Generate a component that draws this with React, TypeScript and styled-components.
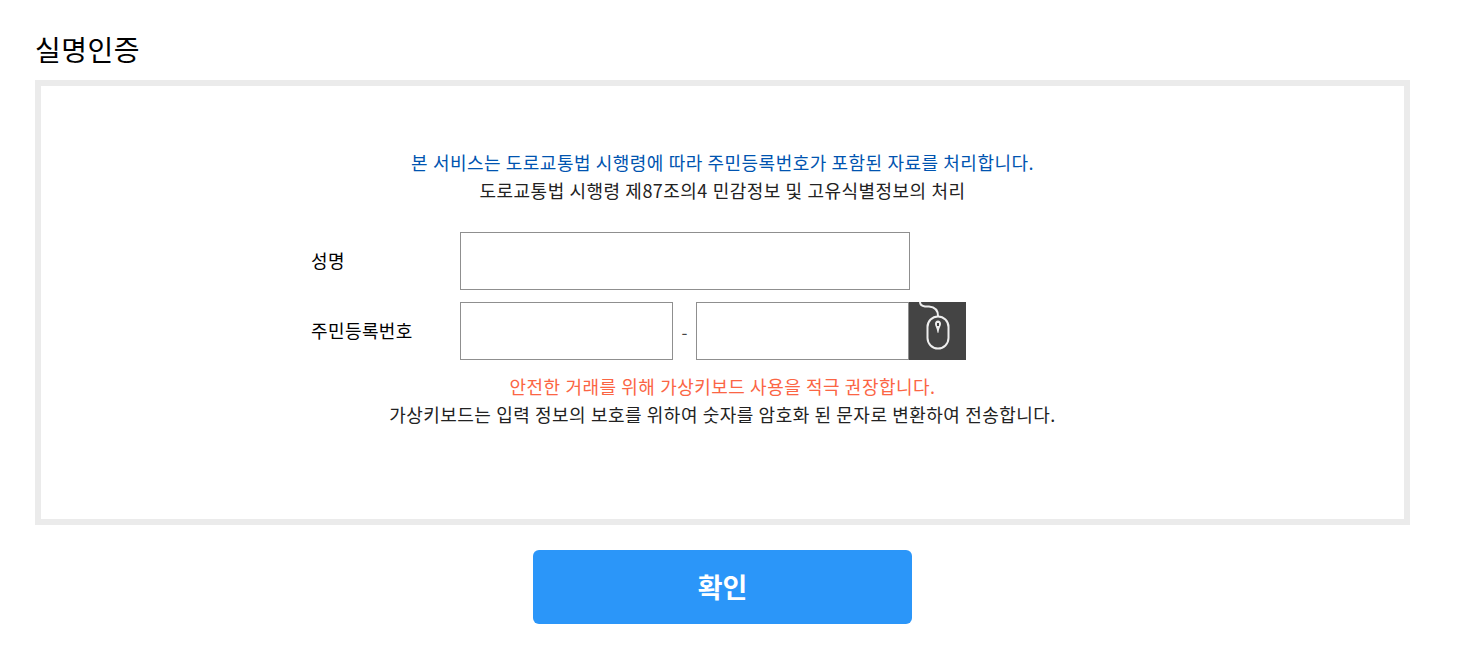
import React from "react"
import styled, { createGlobalStyle } from "styled-components"

const GlobalStyle = createGlobalStyle`
	html, body {
		margin: 0;
		padding: 0;
		background: #fff;
		font-family: "Noto Sans CJK KR", "Noto Sans", sans-serif;
		color: #222;
	}
`

const MouseIcon: React.FC = () => (
	<svg width="57" height="58" viewBox="0 0 57 58" fill="none" stroke="#eee" strokeWidth="2">
		<path d="M11 0c0 3 2 4 5 4.500h4c5 .5 9 3 9 9.500" />
		<rect x="18.500" y="14.500" width="21" height="32" rx="10.500" />
		<path d="M29 18.500c-1.800 0-3 1.400-3 3.200 0 2.300 2 4 2.500 9h1c.5-5 2.500-6.700 2.500-9 0-1.800-1.200-3.200-3-3.200z" fill="#eee" stroke="none" />
		<rect x="28" y="21" width="2" height="3" fill="#444" stroke="none" />
	</svg>
)

const App: React.FC = () => {
	return (
		<Page>
			<GlobalStyle />
			<Heading>실명인증</Heading>
			<Panel>
				<Notice>
					<Blue>본 서비스는 도로교통법 시행령에 따라 주민등록번호가 포함된 자료를 처리합니다.</Blue>
					<p>도로교통법 시행령 제87조의4 민감정보 및 고유식별정보의 처리</p>
				</Notice>
				<Form>
					<Row>
						<Label>성명</Label>
						<Input $width={450} />
					</Row>
					<Row>
						<Label>주민등록번호</Label>
						<Input $width={213} />
						<Dash>-</Dash>
						<Input $width={213} />
						<MouseButton type="button" aria-label="가상키보드">
							<MouseIcon />
						</MouseButton>
					</Row>
				</Form>
				<Notice>
					<Red>안전한 거래를 위해 가상키보드 사용을 적극 권장합니다.</Red>
					<p>가상키보드는 입력 정보의 보호를 위하여 숫자를 암호화 된 문자로 변환하여 전송합니다.</p>
				</Notice>
			</Panel>
			<Actions>
				<Confirm type="button">확인</Confirm>
			</Actions>
		</Page>
	)
}

export default App

const Page = styled.div`
	width: 1375px;
	margin-left: 35px;
	padding-top: 29px;
`

const Heading = styled.h2`
	margin: 0 0 10px;
	font-size: 28px;
	letter-spacing: 0.500px;
	line-height: 41px;
	font-weight: 400;
	color: #000;
`

const Panel = styled.section`
	box-sizing: border-box;
	height: 445px;
	border: 6px solid #ebebeb;
	padding-top: 62px;
`

const Notice = styled.div`
	text-align: center;
	font-size: 18px;
	line-height: 28px;
	letter-spacing: 0.470px;
	word-spacing: 0.300px;
	p {
		margin: 0;
	}
`

const Blue = styled.p`
	color: #0054b0;
`

const Red = styled.p`
	color: #fb6544;
`

const Form = styled.div`
	display: flex;
	flex-direction: column;
	gap: 12px;
	margin: 28px 0 12px 269px;
`

const Row = styled.div`
	display: flex;
	align-items: center;
`

const Label = styled.label`
	width: 150px;
	margin-top: -2px;
	padding-left: 1px;
	box-sizing: border-box;
	font-size: 18px;
	letter-spacing: 0.400px;
	color: #000;
`

const Input = styled.input<{ $width: number }>`
	box-sizing: border-box;
	width: ${(p) => p.$width}px;
	height: 58px;
	border: 1px solid #8f8f8f;
	background: #fff;
	outline: none;
`

const Dash = styled.span`
	width: 23px;
	text-align: center;
	font-size: 17px;
	color: #444;
`

const MouseButton = styled.button`
	width: 57px;
	height: 58px;
	padding: 0;
	border: 0;
	background: #444;
	display: block;
	svg {
		display: block;
	}
`

const Actions = styled.div`
	display: flex;
	justify-content: center;
	margin-top: 25px;
`

const Confirm = styled.button`
	width: 379px;
	height: 74px;
	padding: 0 0 2px;
	border: 0;
	border-radius: 6px;
	background: #2b96f9;
	color: #fff;
	font-family: inherit;
	font-size: 27px;
	font-weight: 700;
`
